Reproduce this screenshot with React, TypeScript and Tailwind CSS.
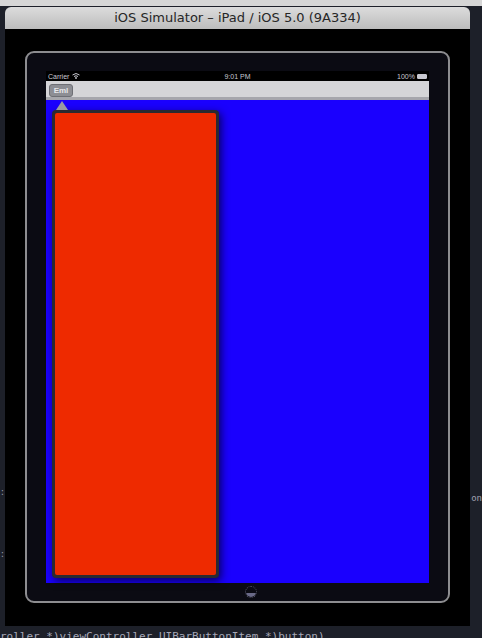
const mono = { fontFamily: '"DejaVu Sans Mono", monospace' };

function StatusBar() {
  return (
    <div className="h-[10px] bg-black flex items-center justify-between px-[2px] text-[7px] leading-none text-[#c8c8d0] font-['Liberation_Sans',sans-serif]">
      <div className="flex items-center gap-[3px] w-[60px]">
        <span>Carrier</span>
        <svg width="8" height="6" viewBox="0 0 8 6">
          <path d="M0.5 2 Q4 -1 7.5 2" stroke="#c8c8d0" fill="none" strokeWidth="1" />
          <path d="M2 3.5 Q4 2 6 3.5" stroke="#c8c8d0" fill="none" strokeWidth="1" />
          <circle cx="4" cy="5" r="0.9" fill="#c8c8d0" />
        </svg>
      </div>
      <span>9:01 PM</span>
      <div className="flex items-center justify-end gap-[2px] w-[60px]">
        <span>100%</span>
        <div className="w-[10px] h-[5px] border border-[#c8c8d0] bg-[#c8c8d0] rounded-[1px]" />
      </div>
    </div>
  );
}

function NavBar() {
  return (
    <div>
      <div className="h-[16px] bg-[#d5d5d8] flex items-center pl-[3px]">
        <div className="h-[13px] mt-[3px] w-[24px] rounded-[3px] bg-[#8d8e94] border border-[#6e6f75] flex items-center justify-center text-[8px] leading-none text-[#e8e8ec] font-['Liberation_Sans',sans-serif] font-bold">
          Eml
        </div>
      </div>
      <div className="h-[3px] bg-[#a6a6ac]" />
    </div>
  );
}

export default function App() {
  return (
    <div className="w-[482px] h-[638px] bg-[#1d2029] overflow-hidden relative">
      <div className="h-[6px] bg-[#d6d6d6]" />
      <div className="h-[1px]" />
      <div className="flex">
        <div className="w-[5px] flex flex-col pt-[480px] gap-[50px] text-[8px] text-[#9a9cab]" style={mono}>
          <span>:</span>
          <span>:</span>
        </div>
        <div className="w-[466px] h-[619px] flex flex-col">
          <div className="h-[22px] rounded-t-[6px] bg-gradient-to-b from-[#dcdcdc] to-[#bdbdbd] flex items-center justify-center text-[13px] text-[#262626] font-['Lucida_Grande','DejaVu_Sans',sans-serif]">
            iOS Simulator – iPad / iOS 5.0 (9A334)
          </div>
          <div className="flex-1 bg-black pl-[20px] pt-[22px]">
            <div className="w-[425px] h-[552px] border-2 border-[#8d8d90] rounded-[9px] bg-[#0b0b13] pl-[19px] pt-[18px] flex flex-col">
              <div className="w-[383px] h-[512px] flex flex-col relative">
                <StatusBar />
                <NavBar />
                <div className="flex-1 bg-[#1a00fe]" />
                {/* popover */}
                <div className="absolute left-[6px] top-[39px] w-[167px] h-[468px] bg-[#2a2a30] rounded-[4px] p-[3px] shadow-[2px_3px_8px_rgba(0,0,20,0.7)]">
                  <div className="w-full h-full bg-[#ee2a00] rounded-[2px]" />
                </div>
                <div className="absolute left-[10px] top-[30px] w-0 h-0 border-l-[6px] border-r-[6px] border-b-[9px] border-l-transparent border-r-transparent border-b-[#9a9aa2]" />
              </div>
              <div className="flex-1 flex items-center justify-center pl-[8px]">
                <div className="w-[12px] h-[12px] rounded-full border border-dotted border-[#555566] flex items-end justify-center overflow-hidden">
                  <div className="w-[10px] h-[4px] bg-[#6a6a88] rounded-b-full" />
                </div>
              </div>
            </div>
          </div>
        </div>
        <div className="flex-1 pt-[485px] text-[9px] text-[#a0a2b0] pl-[1px]" style={mono}>
          on
        </div>
      </div>
      <div className="h-[12px] pt-[5px] text-[11px] leading-none text-[#a6a8b8] whitespace-nowrap" style={mono}>
        roller *)viewController  UIBarButtonItem *)button)
      </div>
    </div>
  );
}
